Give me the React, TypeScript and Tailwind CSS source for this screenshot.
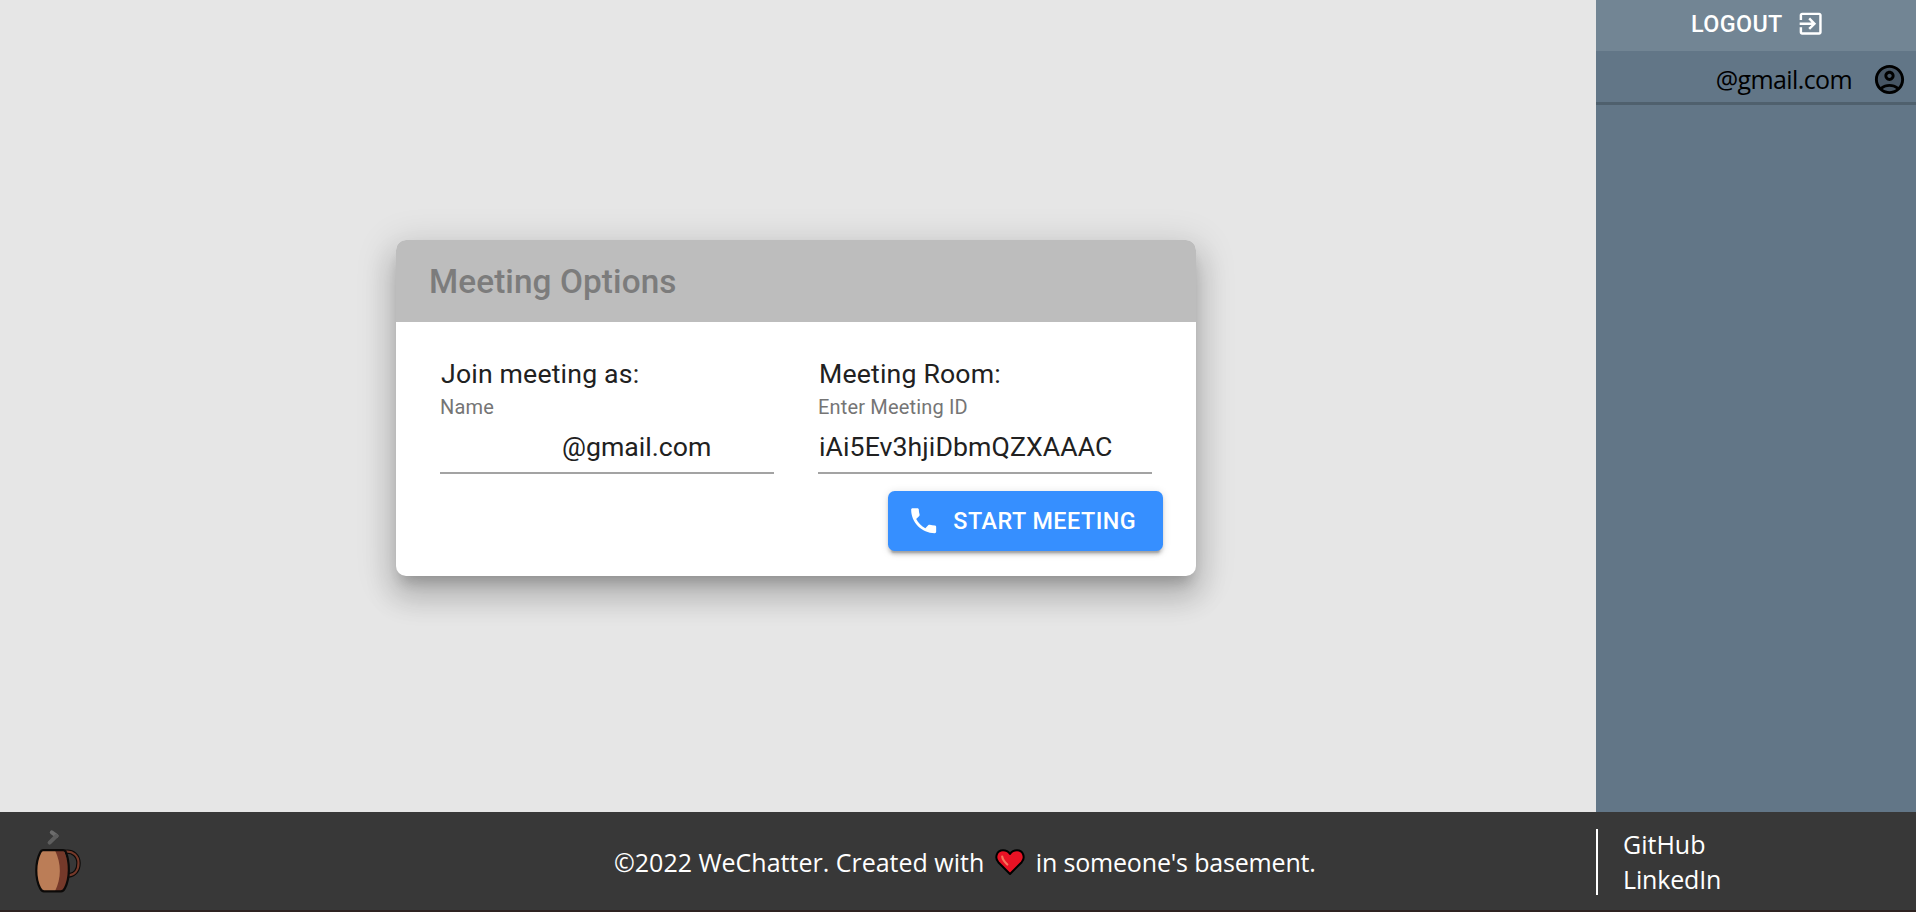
import React from "react";

function LogoutIcon() {
  return (
    <svg viewBox="0 0 24 24" className="h-[29.33px] w-[29.33px] shrink-0" fill="currentColor">
      <path d="M10.09 15.59 11.5 17l5-5-5-5-1.41 1.41L12.67 11H3v2h9.67l-2.58 2.59zM19 3H5c-1.11 0-2 .9-2 2v4h2V5h14v14H5v-4H3v4c0 1.1.89 2 2 2h14c1.1 0 2-.9 2-2V5c0-1.1-.9-2-2-2z" />
    </svg>
  );
}

function AccountIcon() {
  return (
    <svg viewBox="0 0 24 24" className="h-[35px] w-[35px] shrink-0">
      <circle cx="12" cy="12" r="9.4" fill="#465564" />
      <path
        fill="#000"
        d="M12 2C6.48 2 2 6.48 2 12s4.48 10 10 10 10-4.48 10-10S17.52 2 12 2zM7.35 18.5C8.66 17.56 10.26 17 12 17s3.34.56 4.65 1.5C15.34 19.44 13.74 20 12 20s-3.34-.56-4.65-1.5zm10.79-1.38C16.45 15.8 14.32 15 12 15s-4.45.8-6.14 2.12C4.7 15.73 4 13.95 4 12c0-4.42 3.58-8 8-8s8 3.58 8 8c0 1.95-.7 3.73-1.86 5.12z"
      />
      <path
        fill="#000"
        d="M12 6c-1.93 0-3.5 1.57-3.5 3.5S10.07 13 12 13s3.5-1.57 3.5-3.5S13.93 6 12 6zm0 5c-.83 0-1.5-.67-1.5-1.5S11.17 8 12 8s1.5.67 1.5 1.5S12.83 11 12 11z"
      />
    </svg>
  );
}

function PhoneIcon() {
  return (
    <svg viewBox="0 0 24 24" className="h-[33.33px] w-[33.33px] shrink-0" fill="currentColor">
      <path d="M6.62 10.79c1.44 2.83 3.76 5.14 6.59 6.59l2.2-2.2c.27-.27.67-.36 1.02-.24 1.12.37 2.33.57 3.57.57.55 0 1 .45 1 1V20c0 .55-.45 1-1 1-9.39 0-17-7.61-17-17 0-.55.45-1 1-1h3.5c.55 0 1 .45 1 1 0 1.25.2 2.45.57 3.57.11.35.03.74-.25 1.02l-2.2 2.2z" />
    </svg>
  );
}

function MugLogo() {
  return (
    <svg viewBox="0 0 48 66" className="h-[66px] w-[48px]">
      <path d="M18.8 3.4 L23.6 6.8" fill="none" stroke="#6c6c6c" strokeWidth="4" strokeLinecap="round" />
      <path d="M23.6 6.8 L16.6 13.6" fill="none" stroke="#5e5e5e" strokeWidth="4" strokeLinecap="round" />
      <path d="M32 22.8 C40 21.5 45.5 27 45.5 34 C45.5 41 42 46 35.5 46.5" fill="none" stroke="#0c0a09" strokeWidth="4.4" />
      <path d="M32 22.8 C40 21.5 45.5 27 45.5 34 C45.5 41 42 46 35.5 46.5" fill="none" stroke="#75392a" strokeWidth="2.2" />
      <path d="M8.5 21.3 H30.5 C37 33 37 51 30 62.3 H9 C1 51 1 33 8.5 21.3 Z" fill="#bb7d57" />
      <path d="M22 21.3 H30.5 C37 33 37 51 30 62.3 H22 C28.5 49 28.5 35 22 21.3 Z" fill="#75392a" />
      <path
        d="M10 21.2 H30 Q32 21.2 32.8 23 C37 34 37 49 32 59 Q30.5 62.3 28 62.3 H11 Q8.5 62.3 7 59 C2 49 2 34 7.2 23.5 Q8.2 21.2 10 21.2 Z"
        fill="none"
        stroke="#0c0a09"
        strokeWidth="2.2"
      />
    </svg>
  );
}

function Heart() {
  return (
    <svg viewBox="0 0 30 27" className="mr-[10.5px] ml-[11px] h-[27px] w-[30px] shrink-0">
      <path
        d="M15 25 L3.3 13.2 C-0.5 9 1.5 1.3 8 1.3 C11.3 1.3 13.5 2.8 15 5 C16.5 2.8 18.7 1.3 22 1.3 C28.5 1.3 30.5 9 26.7 13.2 Z"
        fill="#e81224"
        stroke="#000"
        strokeWidth="2"
        strokeLinejoin="round"
      />
      <path d="M7.2 7.5 Q7.5 11 12.3 15.5" fill="none" stroke="#f4775c" strokeWidth="2.2" strokeLinecap="round" />
    </svg>
  );
}

function Field({ heading, label, value, indent }: { heading: string; label: string; value: string; indent?: boolean }) {
  return (
    <div className="flex w-[334px] flex-col">
      <div className="h-[40px] pl-px text-[26.67px] leading-[40px] tracking-[0.17px] text-[#212121]">{heading}</div>
      <label className="mt-px h-[24px] text-[20px] leading-[24px] tracking-[0.17px] text-[#757575]">{label}</label>
      <div className="mt-[9px] flex h-[46px] items-start border-b-2 border-[#a3a3a3] pt-[3px]">
        <span
          className={
            indent
              ? "pl-[122px] text-[26.67px] leading-[32px] text-[#212121]"
              : "pl-px text-[26.67px] leading-[32px] tracking-[0.08px] text-[#212121]"
          }
        >
          {value}
        </span>
      </div>
    </div>
  );
}

function MeetingCard() {
  return (
    <section className="h-[336px] w-[800px] rounded-[10px] bg-white shadow-[0_11.7px_13.3px_-6.7px_rgba(0,0,0,0.2),0_20px_28.3px_3.3px_rgba(0,0,0,0.14),0_8.3px_36.7px_6.7px_rgba(0,0,0,0.12)]">
      <h1 className="flex h-[82px] items-center rounded-t-[10px] bg-[#bdbdbd] pt-px pl-[33px] text-[33.33px] font-medium tracking-[0.1px] text-[#7c7c7c]">
        Meeting Options
      </h1>
      <div className="flex gap-[44px] px-[44px] pt-[32px]">
        <Field heading="Join meeting as:" label="Name" value="@gmail.com" indent />
        <Field heading="Meeting Room:" label="Enter Meeting ID" value="iAi5Ev3hjiDbmQZXAAAC" />
      </div>
      <div className="flex justify-end pt-[17px] pr-[33px]">
        <button className="flex h-[60px] w-[275px] items-center rounded-[6.67px] bg-[#368fff] pl-[19px] text-[23.33px] font-medium tracking-[0.5px] text-white shadow-[0_5px_1.7px_-3.3px_rgba(0,0,0,0.2),0_3.3px_3.3px_0_rgba(0,0,0,0.14),0_1.7px_8.3px_0_rgba(0,0,0,0.12)]">
          <PhoneIcon />
          <span className="ml-[13px] whitespace-nowrap">START MEETING</span>
        </button>
      </div>
    </section>
  );
}

function Sidebar() {
  return (
    <aside className="flex w-[320px] shrink-0 flex-col bg-[#627687]">
      <button className="flex h-[51px] items-center justify-center bg-[#728594] pb-[3px] pl-[4px] text-[23.33px] font-medium tracking-[0.35px] text-white">
        <span>LOGOUT</span>
        <span className="ml-[13px]">
          <LogoutIcon />
        </span>
      </button>
      <div className="flex h-[54px] items-center justify-end border-b-[3px] border-[#4f606d] pt-[6px] pr-[9px]">
        <span className="mr-[20px] font-['Open_Sans',sans-serif] text-[25px] tracking-[-0.6px] text-black">@gmail.com</span>
        <AccountIcon />
      </div>
    </aside>
  );
}

function Footer() {
  return (
    <footer className="flex h-[100px] shrink-0 items-start border-b-2 border-[#2e2321] bg-[#383838] font-['Open_Sans',sans-serif] text-[25px] text-white">
      <div className="w-[614px] pt-[17px] pl-[33px]">
        <MugLogo />
      </div>
      <p className="flex h-[98px] w-[982px] items-center pt-[3px] whitespace-nowrap">
        <span>©2022 WeChatter. Created with</span>
        <Heart />
        <span className="tracking-[-0.17px]">in someone's basement.</span>
      </p>
      <nav className="mt-[17px] flex h-[66px] flex-col justify-center border-l-2 border-white pl-[25px]">
        <a className="leading-[35px]">GitHub</a>
        <a className="leading-[35px] tracking-[-0.15px]">LinkedIn</a>
      </nav>
    </footer>
  );
}

export default function App() {
  return (
    <div className="flex h-screen w-screen flex-col overflow-hidden bg-[#e6e6e6] font-['Roboto',sans-serif]">
      <div className="flex min-h-0 flex-1">
        <main className="flex flex-1 items-start justify-center pt-[240px] pr-[4px]">
          <MeetingCard />
        </main>
        <Sidebar />
      </div>
      <Footer />
    </div>
  );
}
